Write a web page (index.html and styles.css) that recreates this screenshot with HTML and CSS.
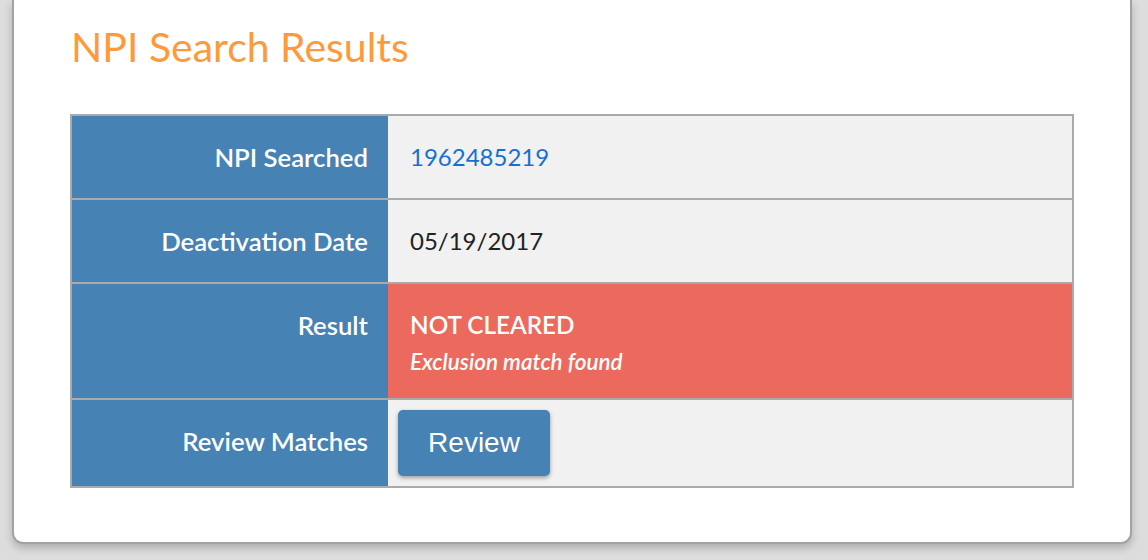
FILE: index.html
```html
<!DOCTYPE html>
<html lang="en">
<head>
<meta charset="utf-8">
<title>NPI Search Results</title>
<link rel="stylesheet" href="styles.css">
</head>
<body>
<div class="card">
  <h1 class="title">NPI Search Results</h1>
  <div class="results">
    <div class="row row-std">
      <div class="label">NPI Searched</div>
      <div class="value"><a class="npi" href="#">1962485219</a></div>
    </div>
    <div class="row row-std">
      <div class="label">Deactivation Date</div>
      <div class="value">05/19/2017</div>
    </div>
    <div class="row row-result">
      <div class="label">Result</div>
      <div class="value value-alert">
        <div class="status">NOT CLEARED</div>
        <div class="status-note">Exclusion match found</div>
      </div>
    </div>
    <div class="row row-review">
      <div class="label">Review Matches</div>
      <div class="value value-action"><button class="btn-review" type="button">Review</button></div>
    </div>
  </div>
</div>
</body>
</html>
```
FILE: styles.css
```css
html, body {
  margin: 0;
  padding: 0;
}
body {
  background: #dddddd;
  font-family: "Lato", "Open Sans", sans-serif;
  height: 560px;
  overflow: hidden;
}
.card {
  margin-left: 12px;
  width: 1004px;
  background: #ffffff;
  border: 2px solid #a3a3a3;
  border-top: none;
  border-radius: 0 0 11px 11px;
  box-shadow: 0 4px 8px rgba(0, 0, 0, 0.22);
  padding: 0 56px 54px 56px;
  box-sizing: content-box;
}
.title {
  margin: 0;
  padding: 22px 0 0 1px;
  height: 114px;
  box-sizing: border-box;
  font-size: 41px;
  line-height: 50px;
  font-weight: 400;
  color: #ff9a3b;
}
.results {
  border: 2px solid #aaaaaa;
  background: #aaaaaa;
  display: grid;
  gap: 2px;
}
.row {
  display: grid;
  grid-template-columns: 316px 1fr;
}
.row-std { height: 82px; }
.row-result { height: 114px; }
.row-review { height: 86px; }
.label {
  background: #4682b4;
  color: #ffffff;
  font-size: 25.7px;
  font-weight: 600;
  text-align: right;
  padding: 24px 20px 0 0;
  line-height: 34px;
}
.value {
  background: #f1f1f1;
  color: #222222;
  font-size: 24px;
  line-height: 34px;
  padding: 24px 22px 0 22px;
}
.npi {
  color: #1770cf;
  text-decoration: none;
}
.value-alert {
  background: #ec6a5d;
  color: #ffffff;
}
.status {
  font-size: 24.3px;
  font-weight: 600;
  line-height: 34px;
}
.status-note {
  font-size: 22.5px;
  font-style: italic;
  font-weight: 600;
  line-height: 40px;
}
.value-action {
  padding: 10px;
}
.btn-review {
  width: 152px;
  height: 66px;
  border: none;
  border-radius: 5px;
  background: #4682b4;
  color: #ffffff;
  font-family: "Liberation Sans", Arial, sans-serif;
  font-size: 28px;
  box-shadow: 0 2px 4px rgba(0, 0, 0, 0.35);
  padding: 0;
  cursor: pointer;
}
```
